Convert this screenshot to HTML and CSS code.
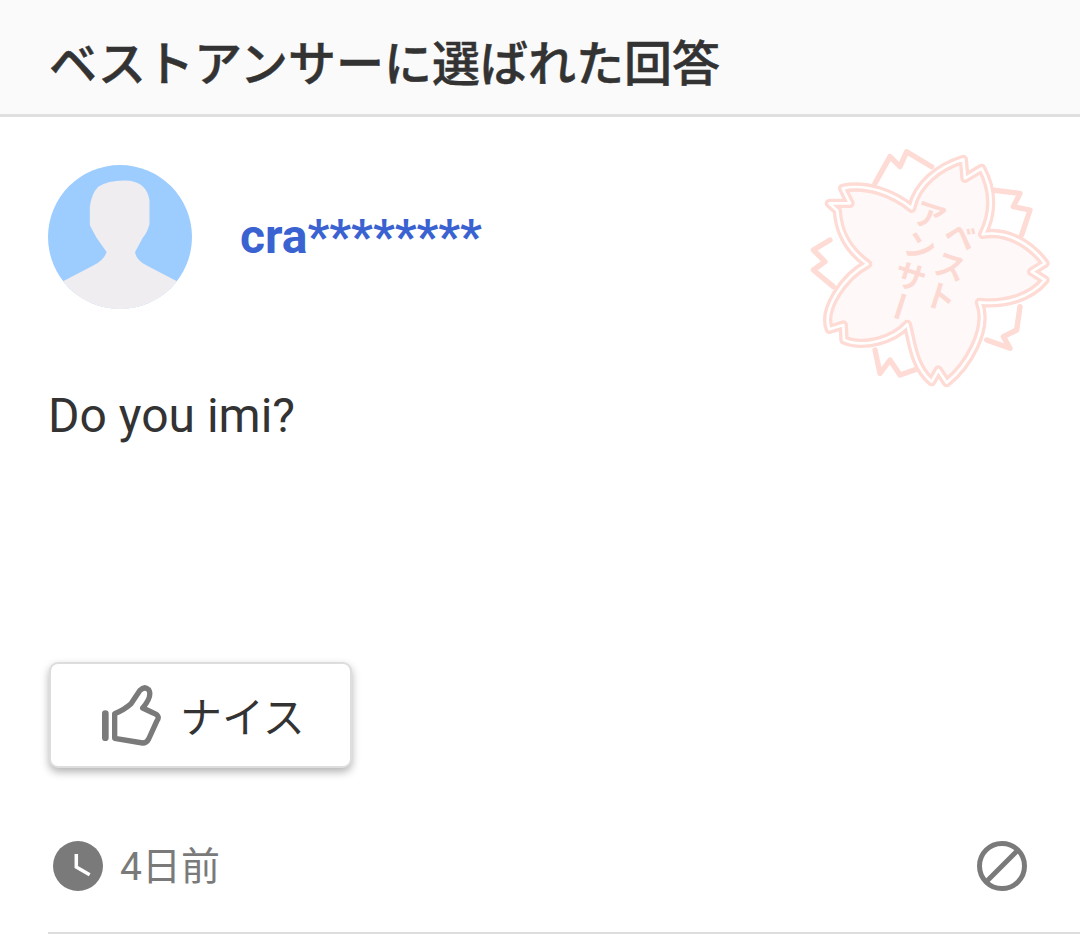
FILE: index.html
```html
<!DOCTYPE html>
<html lang="ja">
<head>
<meta charset="utf-8">
<title>ベストアンサー</title>
<link rel="stylesheet" href="styles.css">
</head>
<body>
<header class="head"><h1 class="head-title">ベストアンサーに選ばれた回答</h1></header>
<main class="answer">
  <svg class="stamp" viewBox="0 0 780 750" aria-hidden="true">
    <path class="sepal" d="M225 130L270 50L300 80L320 35L395 80M575 150L660 160L640 200L690 210L665 285M660 500L650 570L610 590L630 625L560 600M225 630L240 700L270 660L300 705L370 680M90 300L40 330L75 365L40 390L100 440"/>
    <path class="petal-a" d="M335 205C350 130 420 80 490 58L495 115L545 85C585 160 575 230 548 283C620 270 690 310 735 370L695 395L735 420C690 475 610 495 538 487C570 570 500 680 440 728L415 690L395 725C340 680 335 600 322 553C280 600 190 625 132 600L130 555L88 568C65 510 130 410 203 372C130 320 115 260 112 212L88 190L150 190L128 145C200 130 280 160 335 205Z"/>
    <path class="petal-b" d="M335 205C350 130 420 80 490 58L495 115L545 85C585 160 575 230 548 283C620 270 690 310 735 370L695 395L735 420C690 475 610 495 538 487C570 570 500 680 440 728L415 690L395 725C340 680 335 600 322 553C280 600 190 625 132 600L130 555L88 568C65 510 130 410 203 372C130 320 115 260 112 212L88 190L150 190L128 145C200 130 280 160 335 205Z"/>
    <g transform="translate(-45 -15) rotate(18 420 370)">
      <text class="stamp-text" x="500" y="225">ベスト</text>
      <text class="stamp-text" x="395" y="195">アンサー</text>
    </g>
  </svg>
  <div class="user">
    <svg class="avatar" viewBox="55 45 430 430" aria-hidden="true">
      <circle class="avatar-bg" cx="270" cy="260" r="215"/>
      <path class="avatar-fg" d="M205 110Q240 88 300 92Q350 100 358 150L358 222Q350 250 338 262L315 305Q318 330 350 345L440 392A215 215 0 0 1 100 392L190 345Q222 330 230 305L200 262Q190 245 180 225L180 170Q185 130 205 110Z"/>
    </svg>
    <a class="user-name">cra********</a>
  </div>
  <p class="body-text">Do you imi?</p>
  <button class="nice">
    <svg class="nice-icon" viewBox="200 100 210 195" aria-hidden="true">
      <path class="nice-bar" d="M228 192V264"/>
      <path class="nice-hand" d="M256 192V266L340 280Q352 280 358 268L382 215Q395 198 372 190L340 175Q370 140 358 120Q345 108 332 122L305 162Q285 180 256 192Z"/>
    </svg>
    <span class="nice-label">ナイス</span>
  </button>
  <footer class="meta">
    <div class="time">
      <svg class="meta-icon" viewBox="0 0 50 50" aria-hidden="true">
        <circle class="clock-face" cx="25" cy="25" r="25"/>
        <path class="clock-hands" d="M23.3 13V26L36.7 33.7"/>
      </svg>
      <span class="time-label">4日前</span>
    </div>
    <svg class="meta-icon" viewBox="0 0 50 50" aria-hidden="true">
      <circle class="ban-ring" cx="25" cy="25" r="22.5"/>
      <path class="ban-line" d="M41 9L9 41"/>
    </svg>
  </footer>
</main>
</body>
</html>
```
FILE: styles.css
```css
* { box-sizing: border-box; }
html, body { margin: 0; padding: 0; background: #fff; }
body {
  width: 1080px;
  height: 934px;
  overflow: hidden;
  font-family: Roboto, "Noto Sans CJK JP", sans-serif;
  color: #333;
}
.head {
  height: 117px;
  background: #fafafa;
  border-bottom: 3px solid #e0e0e0;
  padding: 6px 49px 0;
  display: flex;
  align-items: center;
}
.head-title {
  margin: 0;
  font: 500 48px/1 "Noto Sans CJK JP", sans-serif;
  -webkit-text-stroke: 0.5px #333;
  color: #333;
}
.answer {
  position: relative;
  margin-left: 48px;
  padding-top: 48px;
}
.stamp {
  position: absolute;
  left: 752px;
  top: 23px;
  width: 260px;
  height: 250px;
}
.sepal { fill: none; stroke: #fedbd5; stroke-width: 16; stroke-linejoin: round; stroke-linecap: round; }
.petal-a { fill: #fef9f8; stroke: #fedbd5; stroke-width: 28; stroke-linejoin: round; }
.petal-b { fill: none; stroke: #fff; stroke-width: 8; stroke-linejoin: round; }
.stamp-text {
  font: 700 96px/1 "Noto Sans CJK JP", sans-serif;
  fill: #fdd9d3;
  writing-mode: vertical-rl;
}
.user { display: flex; align-items: center; gap: 48px; height: 144px; }
.avatar { width: 144px; height: 144px; flex: none; }
.avatar-bg { fill: #9dcdff; }
.avatar-fg { fill: #efedf0; }
.user-name {
  font: 700 48px/1 Roboto, sans-serif;
  color: #3a62d0;
}
.body-text {
  margin: 81px 0 0;
  font: 400 48px/52px Roboto, sans-serif;
  color: #333;
}
.nice {
  display: flex;
  align-items: center;
  width: 303px;
  height: 106px;
  margin: 220px 0 0 1px;
  padding: 0 0 0 45px;
  background: #fff;
  border: 2px solid #ddd;
  border-radius: 9px;
  box-shadow: 0 4px 8px rgba(0,0,0,.3);
  font: inherit;
}
.nice-icon { width: 70px; height: 65px; flex: none; }
.nice-bar { fill: none; stroke: #7a7a7a; stroke-width: 20; stroke-linecap: round; }
.nice-hand { fill: none; stroke: #7a7a7a; stroke-width: 16; stroke-linejoin: round; }
.nice-label {
  margin-left: 14px;
  font: 400 42px/1 "Noto Sans CJK JP", sans-serif;
  color: #333;
}
.meta {
  display: flex;
  justify-content: space-between;
  align-items: center;
  height: 166px;
  padding: 32px 53px 0 5px;
  border-bottom: 2px solid #ddd;
}
.time { display: flex; align-items: center; gap: 17px; }
.meta-icon { width: 50px; height: 50px; flex: none; }
.clock-face { fill: #7a7a7a; }
.clock-hands { fill: none; stroke: #fff; stroke-width: 3.5; }
.time-label {
  position: relative;
  top: 1px;
  font: 400 39px/1 Roboto, "Noto Sans CJK JP", sans-serif;
  color: #7a7a7a;
}
.ban-ring, .ban-line { fill: none; stroke: #7a7a7a; stroke-width: 5; }
```
